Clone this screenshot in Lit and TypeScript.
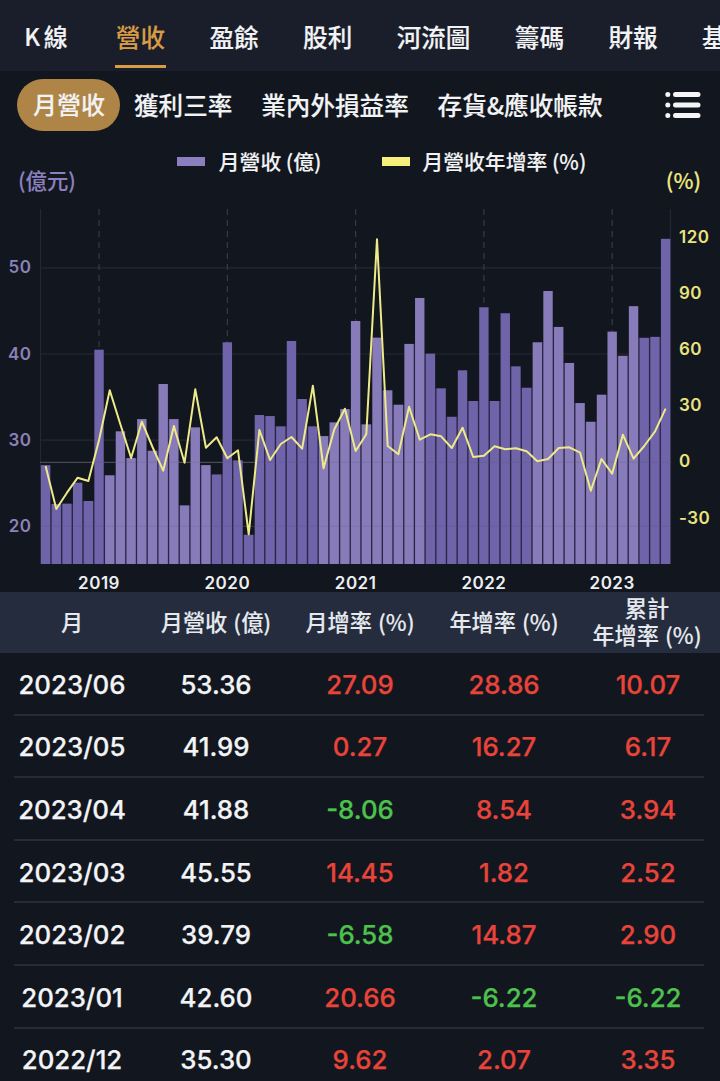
import { LitElement, html, css, svg } from "lit";
import { customElement, state } from "lit/decorators.js";
import { classMap } from "lit/directives/class-map.js";

/** Monthly revenue (億), 2018/08 – 2023/06. */
const REVENUE = [
  27.11, 22.6, 22.64, 25.07, 22.95, 40.5, 25.93, 31.03, 27.93, 32.45, 28.78, 36.52, 32.45, 22.44, 31.49,
  27.11, 26.03, 41.36, 27.66, 19.03, 32.92, 32.8, 31.61, 41.51, 34.78, 31.61, 30.48, 32.07, 33.61, 43.83,
  31.84, 41.9, 35.79, 34.12, 41.17, 46.5, 40.04, 36.02, 32.72, 38.11, 34.55, 45.42, 34.55, 44.73, 38.57,
  36.09, 41.36, 47.31, 43.14, 38.96, 34.31, 32.14, 35.28, 42.6, 39.79, 45.55, 41.88, 41.99, 53.36,
];

/** Year-over-year growth plotted against the right axis, as chart y positions. */
const GROWTH_Y = [
  466, 509, 492.7, 477.7, 481, 440, 390.3, 424.5, 458, 421.7, 447, 470.7, 426, 462.7, 389.3, 447.7, 437.3,
  458.3, 450.3, 534.3, 430, 460, 444, 437, 448.7, 385.7, 468.3, 429.5, 408.7, 451, 434.3, 239.3, 446, 454.3,
  406.7, 439.7, 434.3, 436.3, 448, 427.7, 457, 455.7, 446.3, 449.3, 448.3, 451.3, 461.3, 459, 448, 447.3,
  452.7, 490.7, 459, 473.7, 434.7, 458.7, 446, 431.7, 408.7,
];

const PITCH = 10.69;
const FIRST = 45.6;
const BASE = 564;
const yRevenue = (v: number) => 267.8 + (50 - v) * 8.62;
const xMonth = (i: number) => FIRST + i * PITCH;

@customElement("revenue-chart")
export class RevenueChart extends LitElement {
  static styles = css`
    :host { display: block; }
    .head {
      display: flex;
      justify-content: space-between;
      height: 64px;
      padding: 0 19px 0 18px;
      box-sizing: border-box;
      color: #f2f3f5;
      font: 500 20.8px/30px "Noto Sans CJK TC", sans-serif;
      -webkit-text-stroke: 0.12px currentColor;
      white-space: pre;
    }
    .unit { align-self: flex-end; padding-bottom: 4px; }
    .left { color: #8b80bd; font-size: 21.3px; }
    .right { color: #eee983; font-size: 21.3px; }
    .legend { display: flex; padding-top: 11px; width: 410px; margin-left: 22px; }
    .key { display: flex; align-items: center; height: 30px; }
    .key + .key { margin-left: 61px; }
    .swatch { width: 28px; height: 9px; margin-right: 14px; background: #8b7fc0; }
    .growth { background: #f6ef7b; margin-right: 12px; }
    svg { display: block; }
    .grid { stroke: #232832; stroke-width: 1.2; }
    .zero { stroke: #45484f; stroke-width: 1.2; }
    .dash { stroke: #373a42; stroke-width: 1.2; stroke-dasharray: 6 5; }
    .gaps { fill: #2a2445; }
    .bar { fill: #6f63a9; }
    .light { fill: #887bb9; }
    .over { stroke: #565069; stroke-width: 1; opacity: 0.2; }
    .line { fill: none; stroke: #eeea8a; stroke-width: 2; stroke-linejoin: round; }
    text { font: 600 17px Inter, sans-serif; letter-spacing: 0.5px; }
    .ly { fill: #8b82b8; text-anchor: end; }
    .ry { fill: #e9e480; }
    .year { fill: #eceef2; text-anchor: middle; }
  `;

  render() {
    return html`
      <div class="head">
        <span class="unit left">(億元)</span>
        <div class="legend">
          <span class="key"><i class="swatch"></i>月營收 (億)</span>
          <span class="key"><i class="swatch growth"></i>月營收年增率 (%)</span>
        </div>
        <span class="unit right">(%)</span>
      </div>
      <svg width="720" height="393" viewBox="0 199 720 393">
        <path class="grid" d="M40.5 209V564M670.5 209V564" />
        ${[50, 40, 30, 20].map(
          (v) => svg`
            <path class="grid" d="M40 ${yRevenue(v)}H671" />
            <text class="ly" x="31.5" y=${yRevenue(v) + 5.5}>${v}</text>`
        )}
        <path class="zero" d="M40 462.3H671" />
        ${[5, 17, 29, 41, 53].map((i) => svg`<path class="dash" d="M${xMonth(i)} 209V564" />`)}
        ${REVENUE.slice(1).map((v, i) => {
          const top = yRevenue(Math.min(v, REVENUE[i]));
          return svg`<rect class="gaps" x=${xMonth(i) + 4.5} y=${top} width="1.7" height=${BASE - top} />`;
        })}
        ${REVENUE.map(
          (v, i) => svg`<rect
            class=${classMap({ bar: true, light: Math.floor((i + 4) / 10) % 2 === 1 })}
            x=${xMonth(i) - 4.7} y=${yRevenue(v)} width="9.4" height=${BASE - yRevenue(v)} />`
        )}
        <path class="over" d="M40 462.3H671M40 526.4H671" />
        <polyline class="line" points=${GROWTH_Y.map((y, i) => `${xMonth(i)},${y}`).join(" ")} />
        ${[120, 90, 60, 30, 0, -30].map(
          (v) => svg`<text class="ry" x="679" y=${467.4 - v * 1.873}>${v}</text>`
        )}
        ${[2019, 2020, 2021, 2022, 2023].map(
          (v, k) => svg`<text class="year" x=${xMonth(5 + 12 * k)} y="588.5">${v}</text>`
        )}
      </svg>
    `;
  }
}

@customElement("revenue-table")
export class RevenueTable extends LitElement {
  static styles = css`
    :host { display: block; }
    .row { display: grid; grid-template-columns: repeat(5, 144px); align-items: center; text-align: center; }
    .head {
      height: 61px;
      padding-bottom: 3px;
      box-sizing: border-box;
      background: #242c3d;
      color: #e6e9ee;
      font: 500 22.2px/27px "Noto Sans CJK TC", sans-serif;
      -webkit-text-stroke: 0.12px currentColor;
      word-spacing: 1px;
      white-space: pre;
    }
    .head > :last-child { margin-left: -2px; }
    .line {
      height: 62.6px;
      box-sizing: border-box;
      margin: 0 16px 0 14px;
      padding-top: 3px;
      border-bottom: 2px solid #262b36;
      color: #f3f4f6;
      font: 500 25.8px/32px Inter, sans-serif;
      -webkit-text-stroke: 0.25px currentColor;
    }
    .line > span { margin: 0 14px 0 -14px; }
    .up { color: #e8443a; }
    .down { color: #4cc24d; }
  `;

  private rows = [
    ["2023/06", "53.36", "27.09", "28.86", "10.07"],
    ["2023/05", "41.99", "0.27", "16.27", "6.17"],
    ["2023/04", "41.88", "-8.06", "8.54", "3.94"],
    ["2023/03", "45.55", "14.45", "1.82", "2.52"],
    ["2023/02", "39.79", "-6.58", "14.87", "2.90"],
    ["2023/01", "42.60", "20.66", "-6.22", "-6.22"],
    ["2022/12", "35.30", "9.62", "2.07", "3.35"],
  ];

  render() {
    return html`
      <div class="row head">
        <span>月</span><span>月營收 (億)</span><span>月增率 (%)</span><span>年增率 (%)</span
        ><span>累計<br />年增率 (%)</span>
      </div>
      ${this.rows.map(
        (r) => html`<div class="row line">
          ${r.map(
            (c, i) => html`<span class=${classMap({ up: i > 1 && c[0] !== "-", down: i > 1 && c[0] === "-" })}>${c}</span>`
          )}
        </div>`
      )}
    `;
  }
}

@customElement("app-root")
export class AppRoot extends LitElement {
  static styles = css`
    :host {
      display: block;
      width: 720px;
      height: 1081px;
      overflow: hidden;
      background: #12161f;
      color: #f2f3f5;
      font: 500 24.6px/36px "Noto Sans CJK TC", sans-serif;
      white-space: nowrap;
    }
    .tabs,
    .subs { -webkit-text-stroke: 0.15px currentColor; }
    .tabs { display: flex; gap: 41.8px; height: 71px; padding-left: 23px; background: #1a1e2a; overflow: hidden; }
    .tab { flex: none; height: 47px; padding: 18px 1.3px 0; border-bottom: 3px solid transparent; }
    .tab:first-child { font-size: 23.8px; word-spacing: -1.6px; margin-right: 3.8px; }
    .tab.on { color: #d79c45; border-color: #d79c45; }
    .subs { display: flex; align-items: center; height: 60px; padding: 4px 19px 0 17px; }
    .sub { flex: none; line-height: 50px; padding-bottom: 2px; margin-right: 28.8px; }
    .sub.on { border-radius: 26px; background: #ae8547; padding: 0 15px 2px 16px; margin-right: 14px; font-size: 24px; }
    .menu { margin-left: auto; display: block; }
    .menu path { stroke: #f4f5f7; stroke-width: 5; stroke-linecap: round; }
  `;

  @state() private tab = "營收";
  @state() private sub = "月營收";

  render() {
    return html`
      <nav class="tabs">
        ${["K 線", "營收", "盈餘", "股利", "河流圖", "籌碼", "財報", "基本"].map(
          (t) => html`<span class=${classMap({ tab: true, on: t === this.tab })} @click=${() => (this.tab = t)}>${t}</span>`
        )}
      </nav>
      <div class="subs">
        ${["月營收", "獲利三率", "業內外損益率", "存貨&應收帳款"].map(
          (t) => html`<span class=${classMap({ sub: true, on: t === this.sub })} @click=${() => (this.sub = t)}>${t}</span>`
        )}
        <svg class="menu" width="36" height="28" viewBox="0 0 36 28">
          <path d="M2.8 3.5h.01M2.8 14h.01M2.8 24.5h.01M10.5 3.5H33M10.5 14H33M10.5 24.5H33" />
        </svg>
      </div>
      <revenue-chart></revenue-chart>
      <revenue-table></revenue-table>
    `;
  }
}
